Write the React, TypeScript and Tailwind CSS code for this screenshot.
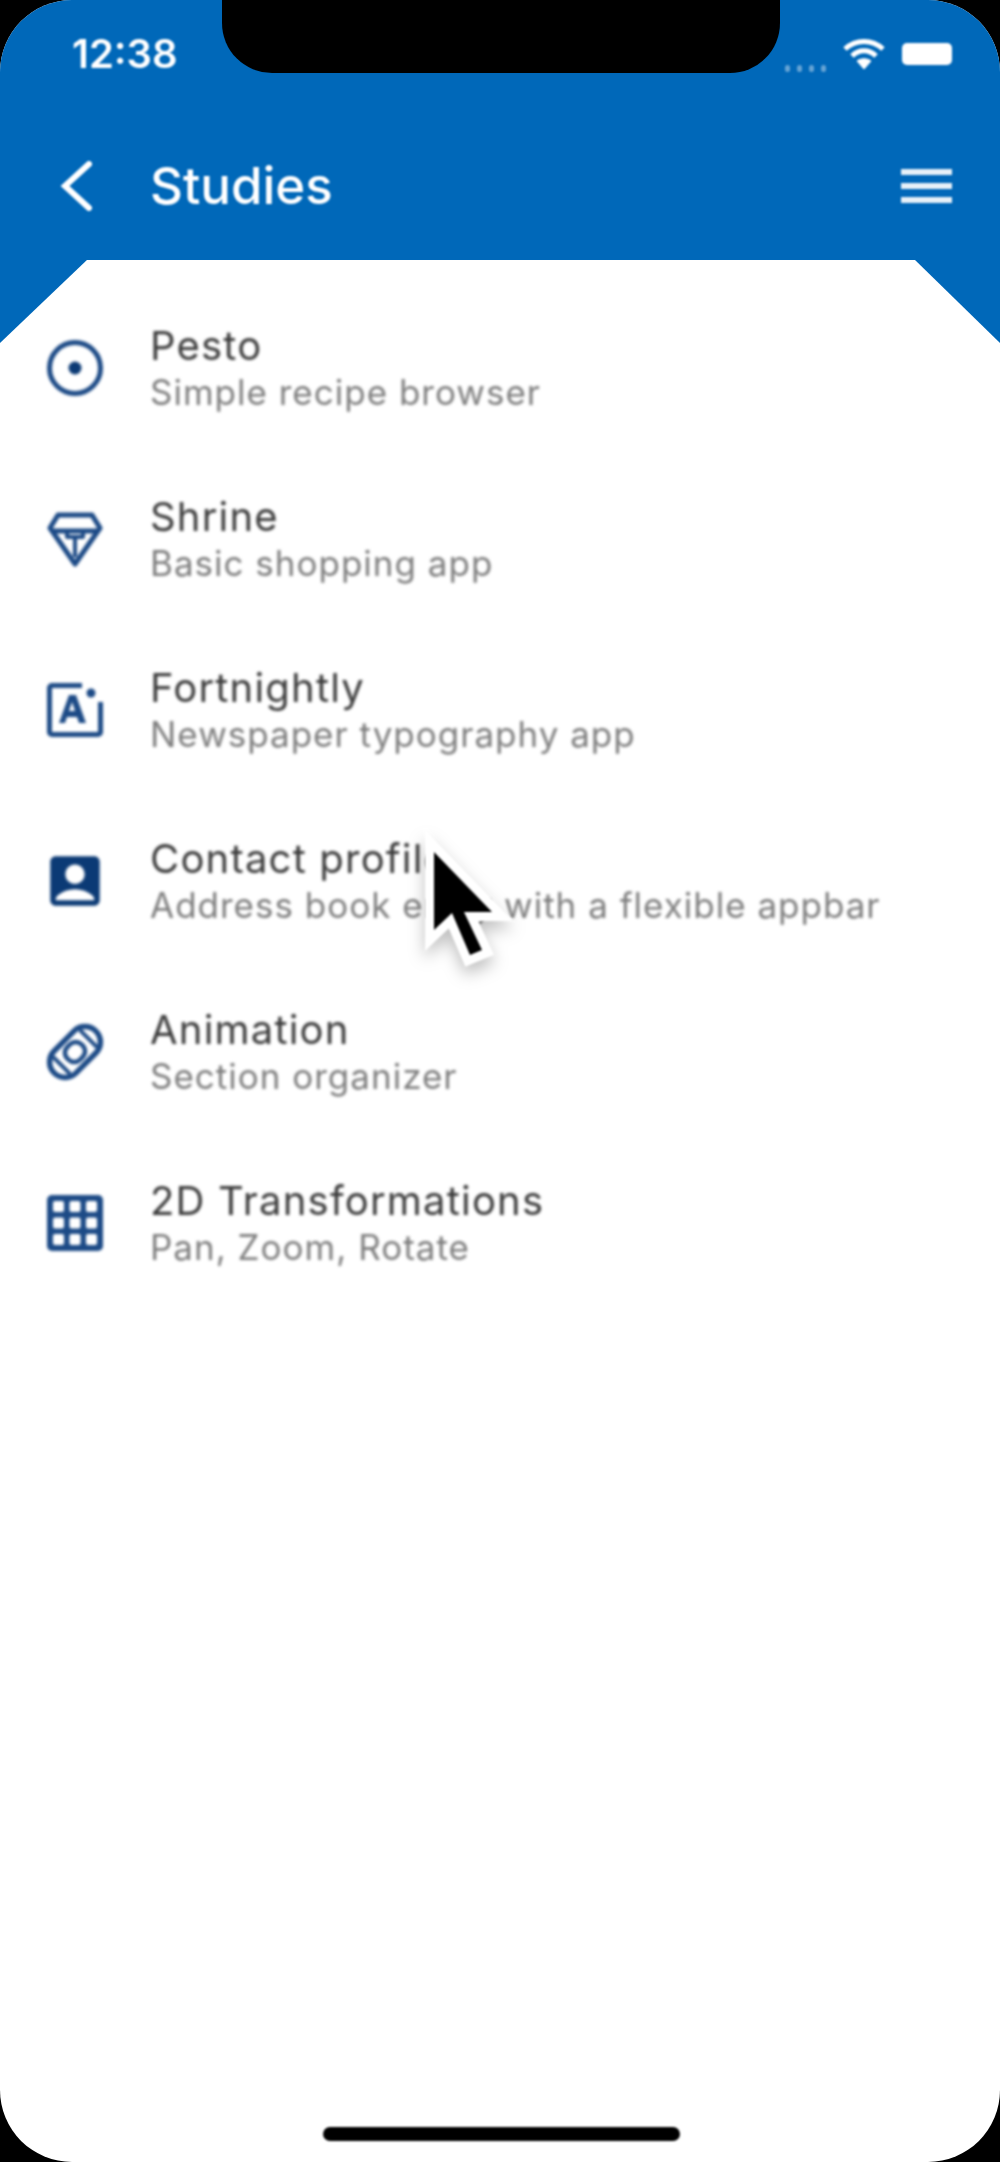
import { MdAccountBox } from "react-icons/md";
import type { ReactNode } from "react";

function PestoIcon() {
  return (
    <svg viewBox="0 0 56 56" className="w-[56px] h-[56px]" fill="none" stroke="#1c4a86" strokeWidth="5">
      <circle cx="28" cy="28" r="25.5" />
      <circle cx="28" cy="28" r="6.5" fill="#0b3a75" stroke="none" />
    </svg>
  );
}

function ShrineIcon() {
  return (
    <svg viewBox="0 0 56 56" className="w-[56px] h-[56px]" fill="none" stroke="#1c4a86" strokeWidth="5" strokeLinejoin="round">
      <path d="M11 4 H45 L53 17 L28 53 L3 17 Z" />
      <path d="M4 20 H52" />
      <path d="M20 20 V26 H36 V20 M28 26 V46" strokeWidth="4" />
    </svg>
  );
}

function FortnightlyIcon() {
  return (
    <svg viewBox="0 0 56 56" className="w-[56px] h-[56px]" fill="#1c4a86">
      <path d="M0 6a5 5 0 0 1 5-5h30v5H5v44h46V20h5v30a5 5 0 0 1-5 5H5a5 5 0 0 1-5-5z" />
      <path d="M12 41 L22 13 h7 L39 41 h-7 l-2-6 h-10 L18 41z M22 29 h6 L25 20z" />
      <circle cx="44" cy="11" r="4.5" />
    </svg>
  );
}

function AnimationIcon() {
  return (
    <svg viewBox="0 0 56 56" className="w-[56px] h-[56px] overflow-visible" fill="none" stroke="#1c4a86">
      <g transform="rotate(-45 28 28)">
        <rect x="-1.5" y="12.5" width="59" height="31" rx="15.5" strokeWidth="5.5" />
        <rect x="18" y="19" width="20" height="18" rx="8" strokeWidth="4.5" />
        <path d="M9 16 V40 M47 16 V40" strokeWidth="4" />
      </g>
    </svg>
  );
}

function GridIcon() {
  return (
    <svg viewBox="0 0 56 56" className="w-[56px] h-[56px]">
      <rect x="0" y="0" width="56" height="56" rx="5" fill="#1c4a86" />
      {[6, 22.5, 39].map((y) =>
        [6, 22.5, 39].map((x) => <rect key={`${x}-${y}`} x={x} y={y} width="11" height="11" rx="2" fill="white" />)
      )}
    </svg>
  );
}

const studies: { title: string; sub: string; icon: ReactNode }[] = [
  { title: "Pesto", sub: "Simple recipe browser", icon: <PestoIcon /> },
  { title: "Shrine", sub: "Basic shopping app", icon: <ShrineIcon /> },
  { title: "Fortnightly", sub: "Newspaper typography app", icon: <FortnightlyIcon /> },
  { title: "Contact profile", sub: "Address book entry with a flexible appbar", icon: <MdAccountBox className="w-[66px] h-[66px] text-[#0b3a75]" /> },
  { title: "Animation", sub: "Section organizer", icon: <AnimationIcon /> },
  { title: "2D Transformations", sub: "Pan, Zoom, Rotate", icon: <GridIcon /> },
];

function StudyRow({ title, sub, icon }: { title: string; sub: string; icon: ReactNode }) {
  return (
    <div className="h-[171px] flex items-center">
      <div className="w-[150px] mb-[4px] flex justify-center">{icon}</div>
      <div className="flex flex-col -mt-[2px]">
        <p className="text-[40px] leading-[47px] tracking-[1.2px] text-[#3a3a3a] font-['Inter',sans-serif] whitespace-nowrap">{title}</p>
        <p className="text-[35px] leading-[46px] tracking-[1px] text-[#7d7d7d] font-['Inter',sans-serif] whitespace-nowrap">{sub}</p>
      </div>
    </div>
  );
}

export default function App() {
  return (
    <div className="relative w-[1000px] h-[2162px] bg-black overflow-hidden font-['Roboto',sans-serif]">
      <div className="relative h-full bg-white rounded-[72px] overflow-hidden">
        {/* App bar */}
        <header className="h-[260px] bg-[#0068b9] flex flex-col text-white">
          <div className="h-[100px] pl-[72px] pr-[48px] pt-[28px] flex justify-between blur-[1px]">
            <span className="text-[40px] leading-[52px] font-semibold font-['Inter',sans-serif]">12:38</span>
            <div className="flex items-start gap-[17px] pt-[10px]">
              <div className="flex gap-[7px] mt-[27px] opacity-40">
                <span className="w-[5px] h-[7px] bg-white rounded-sm" />
                <span className="w-[5px] h-[7px] bg-white rounded-sm" />
                <span className="w-[5px] h-[7px] bg-white rounded-sm" />
                <span className="w-[5px] h-[7px] bg-white rounded-sm" />
              </div>
              <svg viewBox="0 0 42 32" className="w-[42px] h-[32px]" fill="none" stroke="white" strokeWidth="5">
                <path d="M2 11 C13 1 29 1 40 11" />
                <path d="M9 18 C16 11 26 11 33 18" />
                <path d="M21 31 L14 23 C18 20 24 20 28 23z" fill="white" strokeWidth="1" />
              </svg>
              <div className="w-[50px] h-[22px] mt-[5px] bg-white rounded-[5px]" />
            </div>
          </div>
          <div className="flex-1 pl-[60px] pr-[48px] pt-[12px] flex items-center blur-[1px]">
            <svg viewBox="0 0 32 50" className="w-[32px] h-[50px]" fill="none" stroke="white" strokeWidth="6" strokeLinecap="round">
              <path d="M29 3 L5 25 L29 47" />
            </svg>
            <h1 className="ml-[58px] text-[51px] leading-[60px] font-medium font-['Inter',sans-serif]">Studies</h1>
            <div className="ml-auto w-[51px] flex flex-col gap-[8px]">
              <span className="h-[6px] bg-white/90" />
              <span className="h-[6px] bg-white/90" />
              <span className="h-[6px] bg-white/90" />
            </div>
          </div>
        </header>

        {/* Study list */}
        <main className="pt-[24px] blur-[1.4px]">
          {studies.map((s) => (
            <StudyRow key={s.title} title={s.title} sub={s.sub} icon={s.icon} />
          ))}
        </main>

        {/* Chamfered corners under the app bar */}
        <div className="absolute left-0 top-[259px] w-[88px] h-[84px] bg-[#0068b9] [clip-path:polygon(0_0,100%_0,0_100%)]" />
        <div className="absolute right-0 top-[259px] w-[86px] h-[84px] bg-[#0068b9] [clip-path:polygon(0_0,100%_0,100%_100%)]" />

        {/* Home indicator */}
        <div className="absolute left-[323px] top-[2127px] w-[357px] h-[14px] bg-black rounded-full blur-[1px]" />
      </div>

      {/* Notch */}
      <div className="absolute left-[222px] top-0 w-[558px] h-[73px] bg-black rounded-b-[50px]" />

      {/* Mouse cursor */}
      <svg viewBox="0 0 80 120" className="absolute left-[424px] top-[842px] w-[80px] h-[120px] overflow-visible blur-[0.8px] drop-shadow-[0_8px_8px_rgba(0,0,0,0.25)]">
        <path d="M10 10 V88 L28 71 L46 113 L58 108 L40 70 H68 Z" fill="white" stroke="white" strokeWidth="18" strokeLinejoin="miter" strokeMiterlimit="6" />
        <path d="M10 10 V88 L28 71 L46 113 L58 108 L40 70 H68 Z" fill="black" />
      </svg>
    </div>
  );
}
